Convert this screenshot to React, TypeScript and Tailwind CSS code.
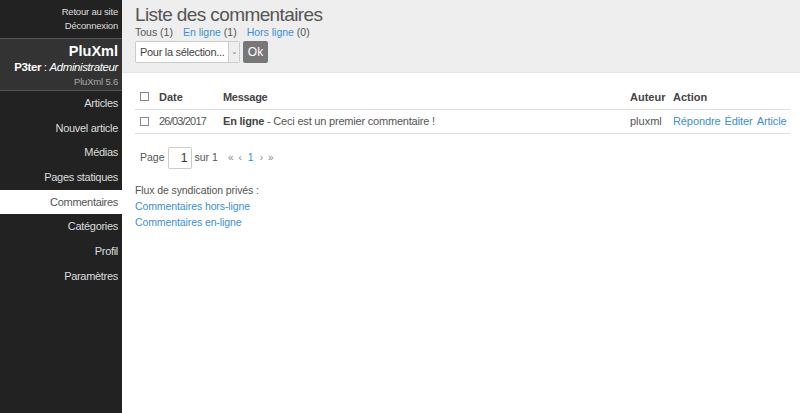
import React from 'react'

const menu = ['Articles', 'Nouvel article', 'Médias', 'Pages statiques', 'Commentaires', 'Catégories', 'Profil', 'Paramètres']

export default function App() {
  return (
    <div className="flex min-h-[413px] w-[800px] bg-white font-['Liberation_Sans',Arial,sans-serif]">
      {/* Sidebar */}
      <aside className="w-[122px] shrink-0 bg-[#222] text-right">
        <div className="h-[38px] px-[4px] pt-[5px] text-[9.5px] leading-[14px] tracking-[-0.2px] text-[#ddd]">
          <div>Retour au site</div>
          <div>Déconnexion</div>
        </div>
        <div className="h-[53px] border-y border-[#555] bg-[#333] px-[4px] pt-[3px] whitespace-nowrap">
          <div className="text-[14.5px] font-bold leading-[18px] text-white">PluXml</div>
          <div className="text-[11.5px] leading-[14px] tracking-[-0.4px] text-white">
            <b>P3ter</b> : <i>Administrateur</i>
          </div>
          <div className="mt-[1px] text-[9.5px] leading-[14px] tracking-[-0.2px] text-[#aaa]">PluXml 5.6</div>
        </div>
        <nav>
          {menu.map((m) => (
            <div
              key={m}
              className={
                m === 'Commentaires'
                  ? 'h-[24.7px] leading-[24.7px] bg-white px-[4px] text-[11px] tracking-[-0.3px] text-[#555]'
                  : 'h-[24.7px] leading-[24.7px] px-[4px] text-[11px] tracking-[-0.3px] text-[#ddd]'
              }
            >
              {m}
            </div>
          ))}
        </nav>
      </aside>

      {/* Main */}
      <main className="flex-1">
        <div className="h-[73px] border-b border-[#e4e4e4] bg-[#eee] px-[13px] pt-[3px]">
          <h1 className="text-[19px] leading-[24px] tracking-[-0.6px] text-[#555]">Liste des commentaires</h1>
          <div className="text-[10.5px] leading-[11px] text-[#555]">
            Tous (1)<span className="ml-[10px] text-[#3a8fd8]">En ligne</span> (1)
            <span className="ml-[10px] text-[#3a8fd8]">Hors ligne</span> (0)
          </div>
          <div className="mt-[3px] flex items-center gap-[3px]">
            <div className="flex h-[22px] w-[105px] items-stretch rounded-[2px] border border-[#ccc] bg-white text-[11px] tracking-[-0.3px] text-[#444] whitespace-nowrap">
              <span className="flex-1 overflow-hidden pl-[4px] leading-[20px]">Pour la sélection...</span>
              <span className="flex w-[11px] items-center justify-center border-l border-[#ccc] bg-[#eee] text-[8px] text-[#888]">⌄</span>
            </div>
            <div className="flex h-[22px] w-[25px] items-center justify-center rounded-[2px] bg-[#777] text-[12px] text-white">Ok</div>
          </div>
        </div>

        <div className="px-[13px] pt-[12px]">
          <table className="w-[655px] text-[11px] text-[#555]">
            <thead>
              <tr className="h-[24px] border-b border-[#ddd] text-left">
                <th className="w-[24px] pl-[5px]">
                  <span className="block h-[9px] w-[9px] border border-[#888] bg-white" />
                </th>
                <th className="w-[64px] font-bold text-[#444]">Date</th>
                <th className="font-bold tracking-[-0.3px] text-[#444]">Message</th>
                <th className="w-[43px] font-bold text-[#444]">Auteur</th>
                <th className="w-[117px] font-bold text-[#444]">Action</th>
              </tr>
            </thead>
            <tbody>
              <tr className="h-[24px] border-b border-[#ddd]">
                <td className="pl-[5px]">
                  <span className="block h-[9px] w-[9px] border border-[#888] bg-white" />
                </td>
                <td className="tracking-[-0.8px]">26/03/2017</td>
                <td className="tracking-[-0.2px]">
                  <b className="text-[#444]">En ligne</b> - Ceci est un premier commentaire !
                </td>
                <td>pluxml</td>
                <td className="tracking-[-0.1px] text-[#3a8fd8]">
                  Répondre<span className="ml-[4px]">Éditer</span>
                  <span className="ml-[4px]">Article</span>
                </td>
              </tr>
            </tbody>
          </table>

          <div className="mt-[13px] flex items-center pl-[5px] text-[10.5px] text-[#555]">
            <span>Page</span>
            <span className="ml-[3px] flex h-[22px] w-[24px] items-center justify-end rounded-[2px] border border-[#ccc] bg-white pr-[3px] text-[12px] text-[#333]">1</span>
            <span className="ml-[3px]">sur 1</span>
            <span className="ml-[10px] text-[10px] text-[#888]">«</span>
            <span className="ml-[5px] text-[10px] text-[#888]">‹</span>
            <span className="ml-[6px] text-[#3a8fd8]">1</span>
            <span className="ml-[6px] text-[10px] text-[#888]">›</span>
            <span className="ml-[5px] text-[10px] text-[#888]">»</span>
          </div>

          <div className="mt-[13px] text-[10.5px] leading-[16px] tracking-[-0.1px]">
            <div className="text-[#555]">Flux de syndication privés :</div>
            <div className="text-[#3a8fd8]">Commentaires hors-ligne</div>
            <div className="text-[#3a8fd8]">Commentaires en-ligne</div>
          </div>
        </div>
      </main>
    </div>
  )
}
